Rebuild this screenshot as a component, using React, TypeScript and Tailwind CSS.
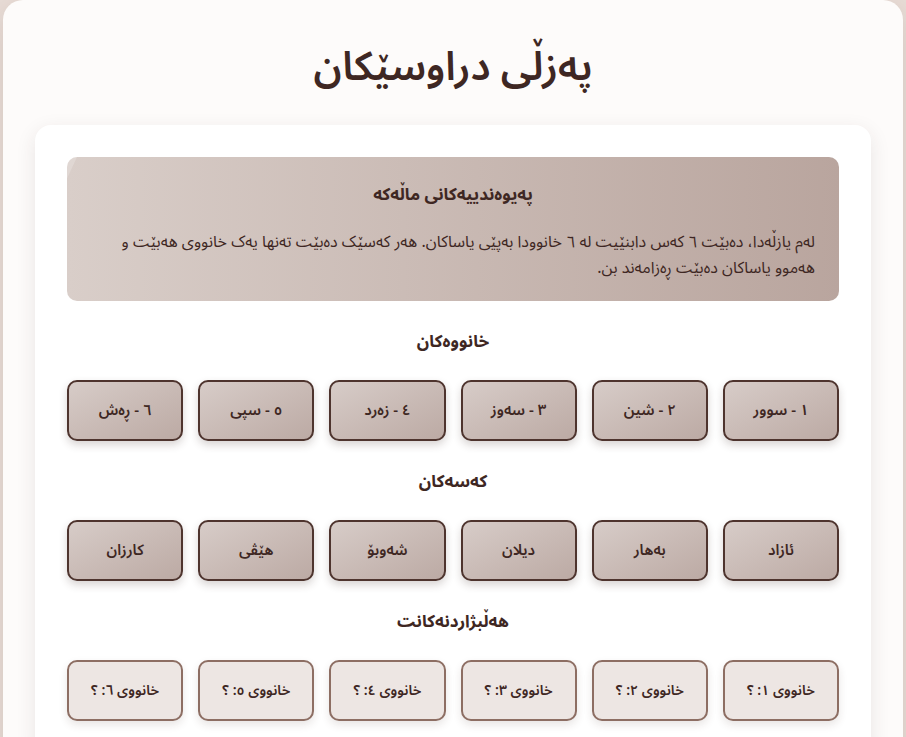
import React from "react";

const houses = ["١ - سوور", "٢ - شین", "٣ - سەوز", "٤ - زەرد", "٥ - سپی", "٦ - ڕەش"];
const people = ["ئازاد", "بەهار", "دیلان", "شەوبۆ", "هێڤی", "کارزان"];
const picks = ["خانووی ١: ؟", "خانووی ٢: ؟", "خانووی ٣: ؟", "خانووی ٤: ؟", "خانووی ٥: ؟", "خانووی ٦: ؟"];

function Section({ title, items, variant }: { title: string; items: string[]; variant: "tile" | "slot" }) {
  return (
    <div>
      <h3 className="mt-[27px] mb-6 text-center text-[17px] leading-7 font-bold text-[#3e2723]">{title}</h3>
      <div className="grid grid-cols-6 gap-[15px]">
        {items.map((item) => (
          <button
            key={item}
            className={
              variant === "tile"
                ? "h-[61px] rounded-[10px] border-2 border-[#4e342e] bg-gradient-to-br from-[#d7ccc8] to-[#bcaaa4] text-[15px] font-semibold text-[#3e2723] shadow-[0_4px_8px_rgba(62,39,35,0.2)]"
                : "h-[61px] rounded-[10px] border-2 border-[#8d6e63] bg-[#ede6e3] text-[14px] font-semibold text-[#3e2723] shadow-[0_4px_8px_rgba(62,39,35,0.12)]"
            }
          >
            {item}
          </button>
        ))}
      </div>
    </div>
  );
}

export default function App() {
  return (
    <div dir="rtl" className="min-h-screen bg-[#e8dcd6] font-['Noto_Sans_Arabic','Noto_Sans',sans-serif]">
      <div className="mx-auto min-h-screen max-w-[900px] rounded-[20px] bg-[#fdfbfa] px-8 pt-[38px] pb-8 shadow-[0_10px_30px_rgba(62,39,35,0.12)]">
        <h1 className="mb-[27px] text-center text-[40px] leading-[60px] font-semibold text-[#3e2723]">پەزڵی دراوسێکان</h1>

        <div className="rounded-2xl bg-white p-8 shadow-[0_6px_20px_rgba(62,39,35,0.1)]">
          <div className="relative overflow-hidden rounded-[10px] bg-gradient-to-r from-[#d9cec9] to-[#b9a59e] px-6 pt-[25px] pb-5 text-[#3e2723]">
            <div className="pointer-events-none absolute -top-10 left-[-60px] h-[200px] w-[40px] rotate-[25deg] bg-white/20" />
            <h2 className="mb-5 text-center text-[17px] leading-[27px] font-bold">پەیوەندییەکانی ماڵەکە</h2>
            <p className="text-[16px] leading-[26px]">
              لەم یازڵەدا، دەبێت ٦ کەس دابنێیت لە ٦ خانوودا بەپێی یاساکان. هەر کەسێک دەبێت تەنها یەک خانووی هەبێت و هەموو یاساکان دەبێت ڕەزامەند بن.
            </p>
          </div>

          <Section title="خانووەکان" items={houses} variant="tile" />
          <Section title="کەسەکان" items={people} variant="tile" />
          <Section title="هەڵبژاردنەکانت" items={picks} variant="slot" />
        </div>
      </div>
    </div>
  );
}
